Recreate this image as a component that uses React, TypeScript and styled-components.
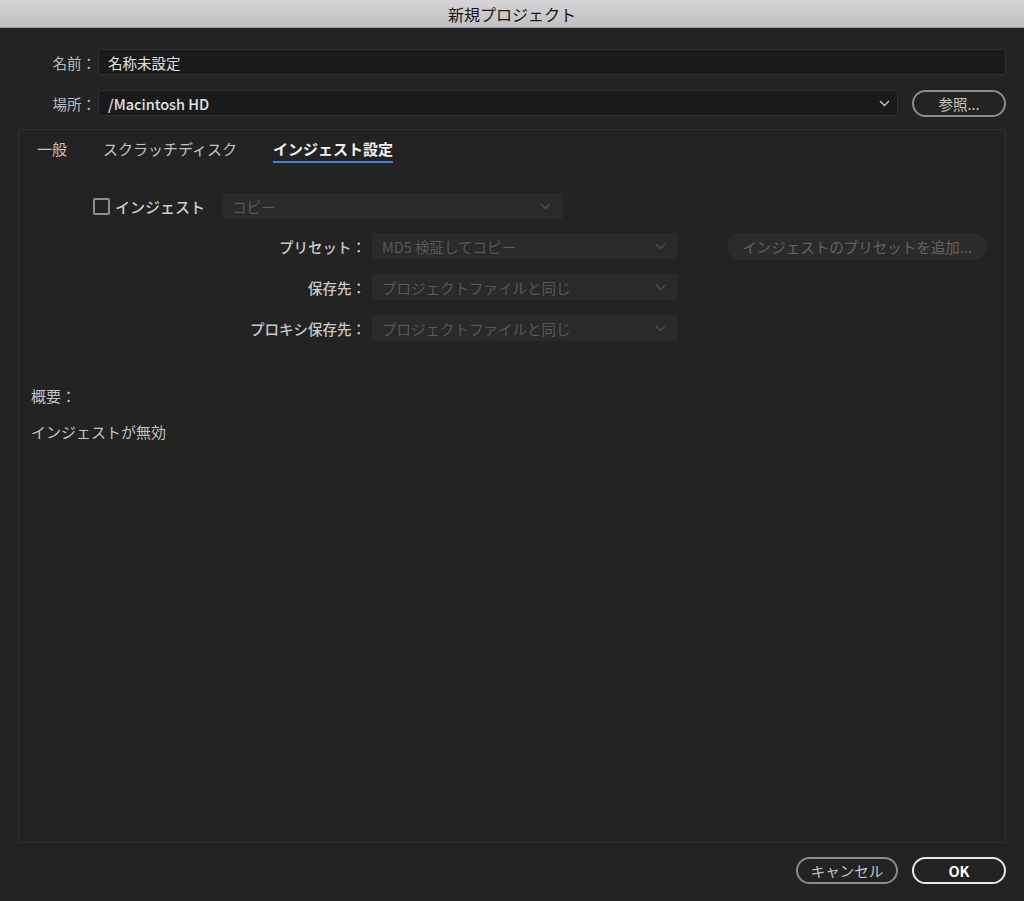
import React from "react"
import styled, { createGlobalStyle } from "styled-components"

const GlobalStyle = createGlobalStyle`
  html, body {
    margin: 0;
    padding: 0;
    background: #232323;
  }
  body {
    font-family: "Noto Sans CJK JP", "Noto Sans", sans-serif;
    -webkit-font-smoothing: antialiased;
  }
  #root {
    height: 901px;
  }
`

const Chevron = ({ color }: { color: string }) => (
  <svg width="11" height="7" viewBox="0 0 11 7">
    <path d="M1 1 L5.5 5.5 L10 1" fill="none" stroke={color} strokeWidth="1.4" />
  </svg>
)

const presetRows = [
  { label: "プリセット：", value: "MD5 検証してコピー" },
  { label: "保存先：", value: "プロジェクトファイルと同じ" },
  { label: "プロキシ保存先：", value: "プロジェクトファイルと同じ" },
]

export default function App() {
  return (
    <Window>
      <GlobalStyle />
      <TitleBar>新規プロジェクト</TitleBar>
      <Content>
        <FieldRow>
          <FieldLabel>名前：</FieldLabel>
          <TextField>名称未設定</TextField>
        </FieldRow>
        <FieldRow>
          <FieldLabel>場所：</FieldLabel>
          <SelectField>
            <span>/Macintosh HD</span>
            <Chevron color="#c8c8c8" />
          </SelectField>
          <PillButton $width={94}>参照...</PillButton>
        </FieldRow>

        <Panel>
          <TabBar>
            <Tab>一般</Tab>
            <Tab>スクラッチディスク</Tab>
            <Tab $active>インジェスト設定</Tab>
          </TabBar>

          <IngestRow>
            <CheckLabel>
              <CheckBox />
              インジェスト
            </CheckLabel>
            <DisabledSelect $width={341}>
              <span>コピー</span>
              <Chevron color="#4e4e4e" />
            </DisabledSelect>
          </IngestRow>

          <PresetGrid>
            {presetRows.map((row, i) => (
              <React.Fragment key={row.label}>
                <PresetLabel>{row.label}</PresetLabel>
                <DisabledSelect $width={306}>
                  <span>{row.value}</span>
                  <Chevron color="#4e4e4e" />
                </DisabledSelect>
                {i === 0 ? (
                  <AddPresetButton>インジェストのプリセットを追加...</AddPresetButton>
                ) : (
                  <span />
                )}
              </React.Fragment>
            ))}
          </PresetGrid>

          <Summary>
            <SummaryText>概要：</SummaryText>
            <SummaryText>インジェストが無効</SummaryText>
          </Summary>
        </Panel>

        <Footer>
          <PillButton $width={102}>キャンセル</PillButton>
          <PillButton $width={94} $primary>
            OK
          </PillButton>
        </Footer>
      </Content>
    </Window>
  )
}

const Window = styled.div`
  height: 901px;
  display: flex;
  flex-direction: column;
  background: #232323;
`

const TitleBar = styled.div`
  height: 27px;
  flex-shrink: 0;
  display: flex;
  align-items: center;
  justify-content: center;
  background: linear-gradient(#d6d4d6, #c1bfc1);
  border-bottom: 1px solid #9b999b;
  color: #141414;
  font-size: 16px;
`

const Content = styled.div`
  flex: 1;
  display: flex;
  flex-direction: column;
  padding: 21px 18px 17px 18px;
  min-height: 0;
`

const FieldRow = styled.div`
  display: flex;
  align-items: center;
  height: 26px;
  margin-bottom: 15px;

  & + & {
    margin-bottom: 13px;
  }
`

const FieldLabel = styled.div`
  width: 78px;
  padding-right: 2px;
  text-align: right;
  color: #bdbdbd;
  font-size: 14.5px;
`

const TextField = styled.div`
  flex: 1;
  height: 26px;
  box-sizing: border-box;
  display: flex;
  align-items: center;
  padding-left: 9px;
  background: #1a1a1a;
  border: 1px solid #2f2f2f;
  border-radius: 3px;
  color: #e2e2e2;
  font-size: 14.5px;
`

const SelectField = styled(TextField)`
  justify-content: space-between;
  padding-right: 7px;
  margin-right: 14px;
  font-weight: 500;
`

const PillButton = styled.div<{ $width: number; $primary?: boolean }>`
  width: ${(p) => p.$width}px;
  height: 27px;
  box-sizing: border-box;
  flex-shrink: 0;
  display: flex;
  align-items: center;
  justify-content: center;
  border: 2px solid ${(p) => (p.$primary ? "#e8e8e8" : "#8c8c8c")};
  border-radius: 14px;
  color: ${(p) => (p.$primary ? "#ffffff" : "#c6c6c6")};
  font-size: 14.5px;
  font-weight: ${(p) => (p.$primary ? 700 : 400)};
`

const Panel = styled.div`
  flex: 1;
  display: flex;
  flex-direction: column;
  border: 1px solid #2f2f2f;
  border-radius: 3px;
`

const TabBar = styled.div`
  display: flex;
  gap: 36px;
  padding: 9px 0 0 18px;
  height: 35px;
  box-sizing: border-box;
`

const Tab = styled.div<{ $active?: boolean }>`
  height: 24px;
  font-size: 15px;
  line-height: 20px;
  color: ${(p) => (p.$active ? "#f2f2f2" : "#c4c4c4")};
  font-weight: ${(p) => (p.$active ? 700 : 400)};
  border-bottom: 2px solid ${(p) => (p.$active ? "#3f82d8" : "transparent")};
  box-sizing: border-box;
`

const IngestRow = styled.div`
  display: flex;
  align-items: center;
  gap: 17px;
  margin-top: 28px;
  padding-left: 74px;
`

const CheckLabel = styled.div`
  display: flex;
  align-items: center;
  gap: 5px;
  color: #cccccc;
  font-size: 15px;
  font-weight: 500;
`

const CheckBox = styled.div`
  width: 17px;
  height: 17px;
  box-sizing: border-box;
  border: 2px solid #8e8e8e;
  border-radius: 2px;
`

const DisabledSelect = styled.div<{ $width: number }>`
  width: ${(p) => p.$width}px;
  height: 26px;
  box-sizing: border-box;
  display: flex;
  align-items: center;
  justify-content: space-between;
  padding: 0 12px 0 10px;
  background: #2a2a2a;
  border-radius: 3px;
  color: #585858;
  font-size: 14.5px;
`

const PresetGrid = styled.div`
  display: grid;
  grid-template-columns: 347px 306px auto;
  grid-auto-rows: 26px;
  row-gap: 15px;
  column-gap: 6px;
  align-items: center;
  margin-top: 14px;
`

const PresetLabel = styled.div`
  text-align: right;
  color: #c8c8c8;
  font-size: 14.5px;
  font-weight: 500;
`

const AddPresetButton = styled.div`
  margin-left: 43px;
  width: 260px;
  height: 27px;
  box-sizing: border-box;
  display: flex;
  align-items: center;
  justify-content: center;
  background: #2b2b2b;
  border-radius: 14px;
  color: #646464;
  font-size: 14.5px;
`

const Summary = styled.div`
  display: flex;
  flex-direction: column;
  gap: 18px;
  margin-top: 46px;
  padding-left: 12px;
`

const SummaryText = styled.div`
  color: #c2c2c2;
  font-size: 15px;
  line-height: 18px;
`

const Footer = styled.div`
  display: flex;
  justify-content: flex-end;
  gap: 14px;
  margin-top: 14px;
`
